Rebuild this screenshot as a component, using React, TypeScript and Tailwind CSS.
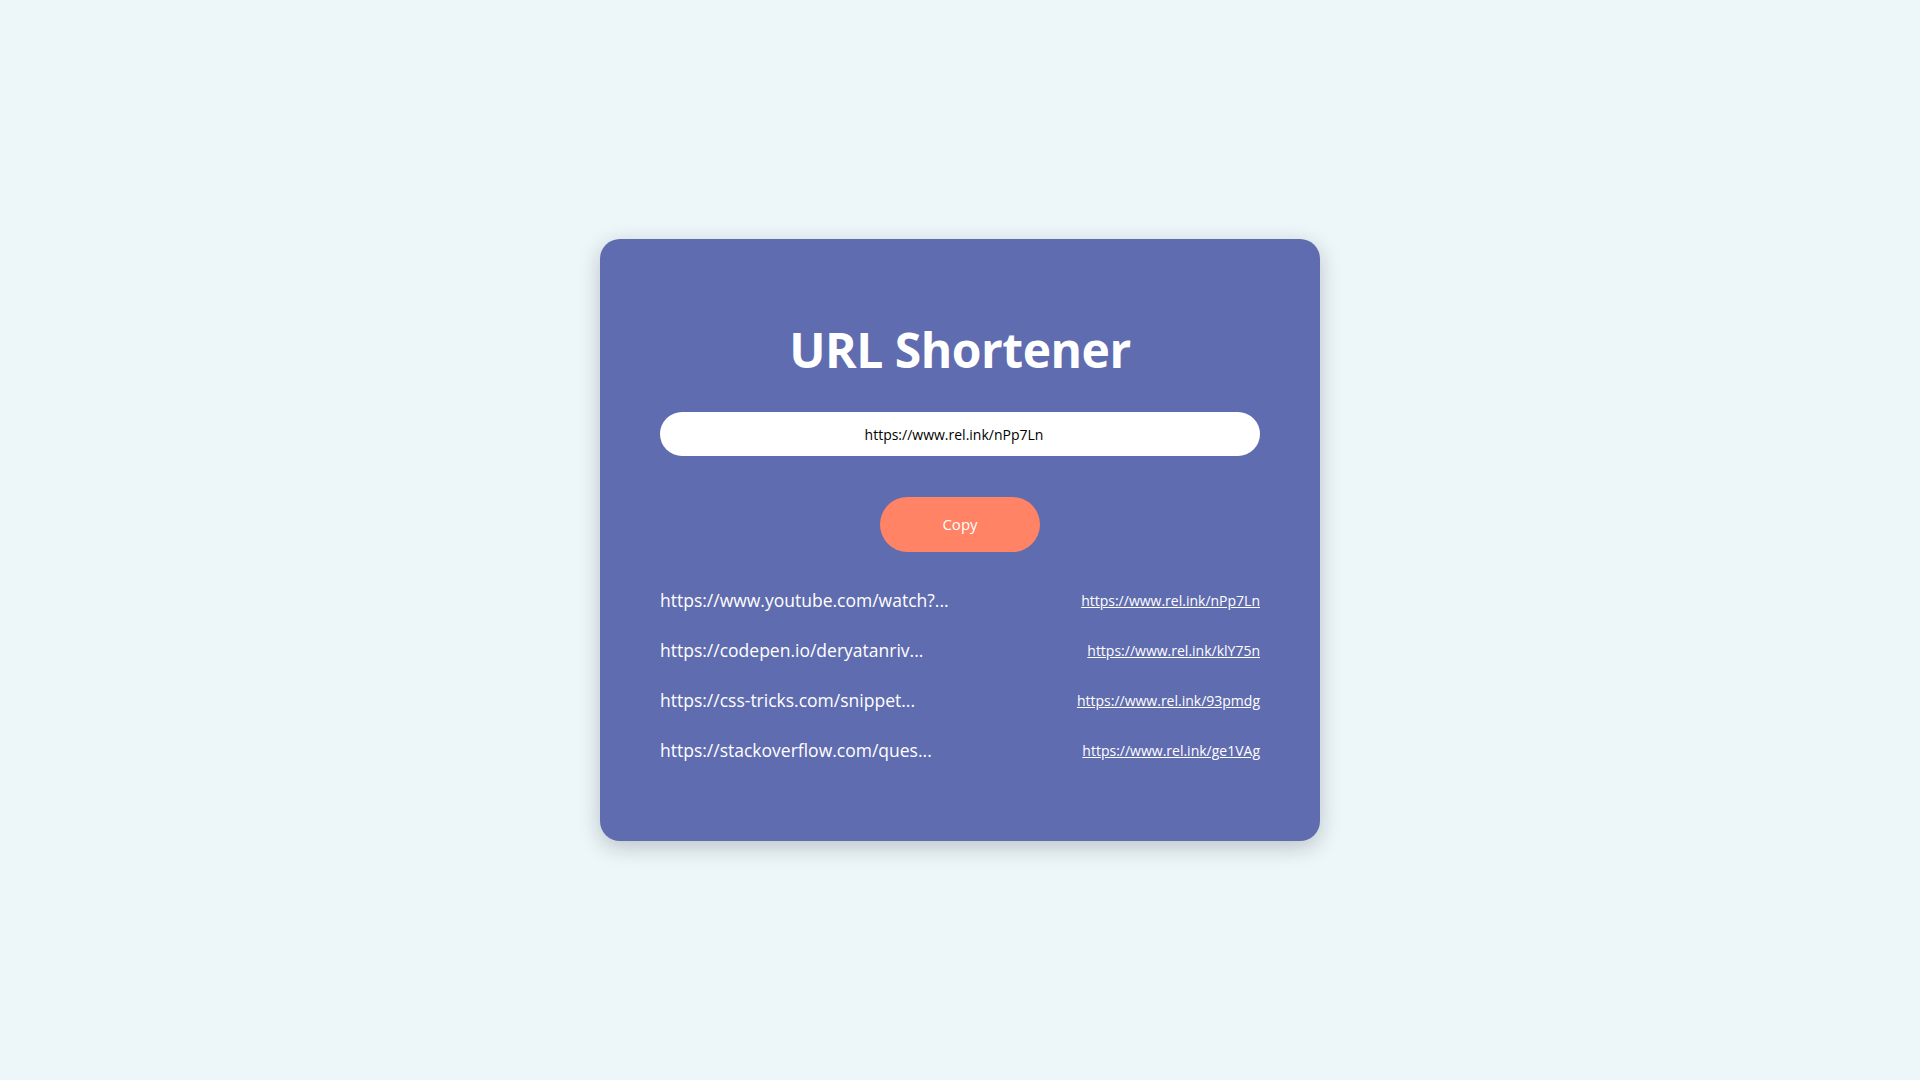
const links = [
  { long: 'https://www.youtube.com/watch?...', short: 'https://www.rel.ink/nPp7Ln' },
  { long: 'https://codepen.io/deryatanriv...', short: 'https://www.rel.ink/klY75n' },
  { long: 'https://css-tricks.com/snippet...', short: 'https://www.rel.ink/93pmdg' },
  { long: 'https://stackoverflow.com/ques...', short: 'https://www.rel.ink/ge1VAg' },
];

export default function App() {
  return (
    <div
      className="min-h-screen w-full bg-[#edf7fa] flex items-center justify-center"
      style={{ fontFamily: '"Open Sans", "Liberation Sans", sans-serif' }}
    >
      <div className="w-[720px] h-[602px] bg-[#5f6caf] rounded-[20px] shadow-[0_6px_22px_rgba(0,0,0,0.22)] px-[60px] pt-[81px] flex flex-col">
        <h1 className="text-white text-[48px] leading-[60px] font-bold text-center tracking-[-0.5px]">
          URL Shortener
        </h1>

        <div className="mt-[32px] h-[44px] bg-white rounded-full flex items-center justify-center pr-[12px] text-[14px] text-black">
          https://www.rel.ink/nPp7Ln
        </div>

        <div className="mt-[41px] flex justify-center">
          <button className="w-[160px] h-[55px] rounded-full bg-[#ff8364] text-white text-[15px]">
            Copy
          </button>
        </div>

        <div className="mt-[23px] flex flex-col">
          {links.map((l) => (
            <div key={l.short} className="h-[50px] flex items-center justify-between">
              <span className="text-white text-[17.5px]">{l.long}</span>
              <a href="#" className="text-white text-[14px] underline">
                {l.short}
              </a>
            </div>
          ))}
        </div>
      </div>
    </div>
  );
}
